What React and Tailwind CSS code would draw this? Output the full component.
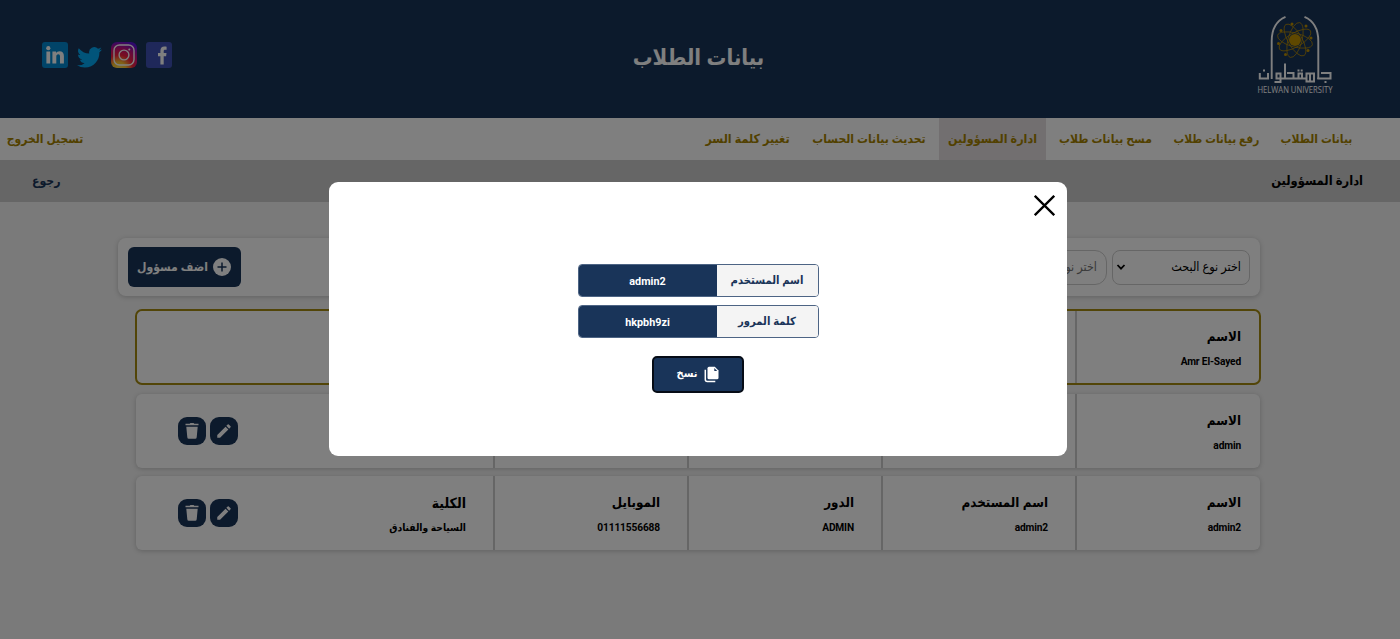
import React from "react";
import { MdEdit } from "react-icons/md";

const NAV = [
  { label: "بيانات الطلاب", cls: "w-[71px] text-[12px]" },
  { label: "رفع بيانات طلاب", cls: "w-[85px] text-[11.800px]" },
  { label: "مسح بيانات طلاب", cls: "w-[93px] text-[12.100px]" },
  { label: "ادارة المسؤولين", cls: "w-[89px] text-[12.400px]", active: true },
  { label: "تحديث بيانات الحساب", cls: "w-[114px] text-[12.100px]" },
  { label: "تغيير كلمة السر", cls: "w-[85px] text-[12.400px]" },
];

function LinkedIn() {
  return (
    <svg viewBox="0 0 26 26" className="size-[26px]">
      <rect width="26" height="26" rx="3" fill="#0288d1" />
      <circle cx="6.300" cy="6.200" r="2.100" fill="#fff" />
      <path d="M4.400 9.600h3.800V21.500H4.400zM10.400 9.600h3.600v1.500c.7-1.100 1.900-1.800 3.500-1.800 2.900 0 4.400 1.700 4.400 4.700v7.500h-3.900v-6.900c0-1.500-.6-2.300-1.700-2.300-1.300 0-2 .9-2 2.300v6.900h-3.900z" fill="#fff" />
    </svg>
  );
}

function Twitter() {
  return (
    <svg viewBox="0 0 24 20" className="mt-[5px] h-[21px] w-[25px]">
      <path fill="#03a9f4" d="M24 2.400a9.800 9.800 0 0 1-2.800.8A4.900 4.900 0 0 0 23.300.5a9.900 9.900 0 0 1-3.100 1.200 4.900 4.900 0 0 0-8.400 4.500A14 14 0 0 1 1.700 1a4.900 4.900 0 0 0 1.500 6.600 4.900 4.900 0 0 1-2.200-.6v.1a4.900 4.900 0 0 0 3.900 4.800 4.900 4.900 0 0 1-2.200.1 4.900 4.900 0 0 0 4.600 3.400A9.900 9.900 0 0 1 0 17.400a13.900 13.900 0 0 0 7.500 2.200c9.100 0 14-7.500 14-14v-.6A10 10 0 0 0 24 2.400z" />
    </svg>
  );
}

function Instagram() {
  return (
    <svg viewBox="0 0 26 26" className="size-[26px]">
      <defs>
        <radialGradient id="ig" cx="0.3" cy="1.05" r="1.1">
          <stop offset="0" stopColor="#ffdd55" />
          <stop offset="0.25" stopColor="#ffc52e" />
          <stop offset="0.5" stopColor="#f5203d" />
          <stop offset="0.74" stopColor="#c8107d" />
          <stop offset="1" stopColor="#5b10d8" />
        </radialGradient>
      </defs>
      <rect width="26" height="26" rx="6" fill="url(#ig)" />
      <rect x="3" y="3" width="20" height="20" rx="5.500" fill="none" stroke="#fff" strokeWidth="1.400" />
      <circle cx="13" cy="13" r="4.900" fill="none" stroke="#fff" strokeWidth="1.400" />
      <circle cx="18.300" cy="7.600" r="1" fill="#fff" />
    </svg>
  );
}

function Facebook() {
  return (
    <svg viewBox="0 0 26 26" className="size-[26px]">
      <rect width="26" height="26" rx="3" fill="#3f51b5" />
      <path fill="#fff" d="M14.400 22.500v-8.300h-2.400v-3.300h2.400V8.900c0-2.800 1.500-4.300 4-4.300.9 0 1.700.1 2.200.2v3h-1.400c-1.200 0-1.500.6-1.500 1.400v1.700h2.800l-.4 3.300h-2.400v8.300z" />
    </svg>
  );
}

function Logo() {
  return (
    <svg viewBox="0 0 80 84" className="h-[84px] w-[80px]" aria-label="Helwan University">
      <g fill="none" stroke="#fff" strokeWidth="1.900">
        <path d="M16.700 67V29C16.700 16 22 8.500 30.500 4.800" />
        <path d="M63.300 67V29C63.300 16 58 8.500 49.500 4.800" />
      </g>
      <g transform="translate(0 1)">
        <g fill="none" stroke="#bf9000" strokeWidth="0.700">
          <ellipse cx="40" cy="27" rx="18" ry="7" transform="rotate(15 40 27)" />
          <ellipse cx="40" cy="27" rx="18" ry="7" transform="rotate(60 40 27)" />
          <ellipse cx="40" cy="27" rx="18" ry="7" transform="rotate(105 40 27)" />
          <ellipse cx="40" cy="27" rx="18" ry="7" transform="rotate(150 40 27)" />
        </g>
        <g fill="#bf9000">
          <circle cx="40" cy="27" r="6" />
          <circle cx="37" cy="11" r="1.500" />
          <circle cx="51" cy="13" r="1.500" />
          <circle cx="26" cy="17.500" r="1.500" />
          <circle cx="56" cy="25" r="1.500" />
          <circle cx="23.500" cy="30.500" r="1.500" />
          <circle cx="53" cy="37.500" r="1.500" />
          <circle cx="30.500" cy="41.500" r="1.500" />
        </g>
      </g>
      <g fill="none" stroke="#fff" strokeWidth="2">
        <path d="M4.800 61V66.500H13V61M30 51.500V66.500H25.500M25.500 61.500H21.500V66.500H25.500V70H19.500M25.500 60.500V70M30 66.500H38.500V61H32M38 66.500H43.500V61.500H47V66.500H43M47 66.500H51.500V61.500H55V69.500H51.500V66.500M55 61.500H59V69.500H55M66 61H75.500V66.500H62.300" />
      </g>
      <path fill="#fff" d="M8 57.500h2v2H8zM42.500 57.500h2v2h-2zM45.700 57.500h2v2h-2zM69.500 69h2v2h-2z" />
      <text x="2.500" y="80.500" textLength="75" lengthAdjust="spacingAndGlyphs" direction="ltr" fill="#fff" fontWeight="400" fontFamily="Open Sans, sans-serif" fontSize="8.500">HELWAN UNIVERSITY</text>
    </svg>
  );
}

function Trash() {
  return (
    <svg viewBox="0 0 16 18" className="h-[18px] w-4" fill="#fff">
      <path d="M1.500 1.800h4.200l.7-.9h3.200l.7.900h4.200v1.500h-13zM2.300 4.800h11.400l-1 10.400q-.1 1.500-1.500 1.500H4.800q-1.400 0-1.500-1.500z" />
    </svg>
  );
}

function CopyIcon() {
  return (
    <svg viewBox="0 0 15 17" className="h-[17px] w-[15px]">
      <path fill="#fff" d="M5 .8h5.800L14.500 4.500v7.300q0 1.500-1.500 1.500H5q-1.500 0-1.500-1.500V2.300Q3.500.8 5 .8z" />
      <path fill="#193459" d="M10.300 2v2.900h2.900z" />
      <path fill="none" stroke="#fff" strokeWidth="1.500" d="M1.300 3.800v9.700q0 2 2 2h8" />
    </svg>
  );
}

function Cell({ title, value }) {
  return (
    <div className="flex w-[194px] shrink-0 flex-col border-r-2 border-[#cccccc] pt-[17px] pr-[27px] first:w-[183px] first:border-r-0 first:pr-[19px]">
      <div className="text-[13.300px] leading-5 whitespace-nowrap">{title}</div>
      <div className="mt-[6px] text-[10.200px] leading-[18px] tracking-[-0.15px] whitespace-nowrap">{value}</div>
    </div>
  );
}

function Row({ name, user, role, mobile, college, own }) {
  return (
    <div className={own ? "flex h-[74px] rounded-md bg-white outline-2 -outline-offset-1 outline-[#a58a10]" : "flex h-[74px] rounded-md bg-white shadow-[0_1px_5px_rgba(0,0,0,0.2)]"}>
      <Cell title="الاسم" value={name} />
      <Cell title="اسم المستخدم" value={user} />
      <Cell title="الدور" value={role} />
      <Cell title="الموبايل" value={mobile} />
      {!own && (
        <div className="flex grow items-center border-r-2 border-[#cccccc] pr-[27px]">
          <div className="w-[228px] self-start pt-[17px]">
            <div className="text-[14px] leading-5">الكلية</div>
            <div className="mt-[6px] text-[10.200px] leading-[18px]">{college}</div>
          </div>
          <div className="flex gap-[4px]">
            <div className="flex size-[28px] items-center justify-center rounded-[9px] bg-[#193459] text-white">
              <MdEdit size={18} />
            </div>
            <div className="flex size-[28px] items-center justify-center rounded-[9px] bg-[#193459]">
              <Trash />
            </div>
          </div>
        </div>
      )}
    </div>
  );
}

function Credential({ label, value }) {
  return (
    <div className="flex h-[33px] w-[241px] overflow-hidden rounded-[4px] border border-[#4d6484]">
      <div className="flex w-[101px] items-center justify-center bg-[#f4f4f4] pt-px text-[11.200px] whitespace-nowrap text-[#193459]">{label}</div>
      <div className="flex grow items-center justify-center bg-[#193459] pt-[3px] text-[10.800px] text-white">{value}</div>
    </div>
  );
}

export default function App() {
  return (
    <div dir="rtl" className="relative h-[639px] w-[1400px] overflow-hidden bg-[#f4f4f4] font-[Roboto,'DejaVu_Sans_Condensed','DejaVu_Sans',sans-serif] font-bold text-black">
      <header className="flex h-[118px] bg-[#193459]">
        <div className="w-[145px] pt-[12px] pr-[65px]">
          <Logo />
        </div>
        <h1 className="grow pt-[41px] pr-[47px] text-center text-[22px] leading-[34px] text-white">بيانات الطلاب</h1>
        <div dir="ltr" className="mr-auto ml-[42px] flex w-[147px] gap-[9px] pt-[42px]">
          <LinkedIn />
          <Twitter />
          <Instagram />
          <Facebook />
        </div>
      </header>

      <nav className="flex h-[42px] items-stretch bg-white pr-[39px] pl-[7px] text-[#a58200]">
        <div className="flex gap-1">
          {NAV.map((n) => (
            <div key={n.label} className={"flex items-center justify-center px-[9px] " + (n.active ? "bg-[#e4dfe0]" : "")}>
              <span className={"flex justify-center leading-[18px] whitespace-nowrap " + n.cls}>{n.label}</span>
            </div>
          ))}
        </div>
        <div className="mr-auto flex w-[76px] items-center justify-center text-[12px] whitespace-nowrap">تسجيل الخروج</div>
      </nav>

      <div className="flex h-[42px] items-center justify-between bg-[#cccccc] pr-[37px] pl-[32px] text-[12.800px]">
        <span>ادارة المسؤولين</span>
        <span className="text-[12.200px] text-[#193459]">رجوع</span>
      </div>

      <main className="mt-[36px] mr-[140px] w-[1142px]">
        <section className="flex h-[58px] items-center rounded-lg bg-white px-[10px] shadow-[0_1px_5px_rgba(0,0,0,0.2)]">
          <div className="flex h-[35px] w-[138px] items-center justify-between rounded-lg border border-[#cccccc] pr-[8px] pl-[3px] text-[12.500px] font-normal">
            <span>اختر نوع البحث</span>
            <svg viewBox="0 0 10 10" className="size-[10px]" fill="none" stroke="#000" strokeWidth="1.800"><path d="M1.500 3 5 6.700 8.500 3" /></svg>
          </div>
          <div className="mr-[5px] flex h-[35px] w-[200px] items-center rounded-xl border border-[#cccccc] pr-[9px] text-[12.500px] font-normal text-[#757575]">اختر نوع البحث</div>
          <button className="mr-auto flex h-[40px] w-[113px] items-center gap-[5px] rounded-md bg-[#193459] pr-[10px] text-[12.100px] whitespace-nowrap text-white">
            <svg viewBox="0 0 18 18" className="size-[18px] shrink-0"><circle cx="9" cy="9" r="9" fill="#fff" /><path d="M9 4.500v9M4.500 9h9" stroke="#193459" strokeWidth="1.500" /></svg>
            اضف مسؤول
          </button>
        </section>

        <div className="mt-[14px] flex w-[1124px] flex-col">
          <Row own name="Amr El-Sayed" user="amr" role="ADMIN" mobile="01111556688" />
          <div className="mt-[10px]"><Row name="admin" user="admin" role="ADMIN" mobile="01111556688" /></div>
          <div className="mt-[8px]"><Row name="admin2" user="admin2" role="ADMIN" mobile="01111556688" college="السياحة والفنادق" /></div>
        </div>
      </main>

      <div className="absolute inset-0 bg-black/50 pt-[182px] pl-[329px]" dir="ltr">
        <div dir="rtl" className="flex h-[274px] w-[738px] flex-col rounded-[9px] bg-white">
          <svg viewBox="0 0 21 21" className="mt-[13px] mr-[12px] size-[21px]" fill="none" stroke="#000" strokeWidth="2.300"><path d="M.8.8 20.200 20.200M20.200.8.8 20.200" /></svg>
          <div className="mt-[48px] flex flex-col items-center">
            <Credential label="اسم المستخدم" value="admin2" />
            <div className="mt-[8px]"><Credential label="كلمة المرور" value="hkpbh9zi" /></div>
            <button className="mt-[18px] flex h-[37px] w-[92px] items-center justify-center gap-[7px] rounded-[5px] border-2 border-[#060c16] bg-[#193459] text-[11px] text-white">
              <CopyIcon />
              نسخ
            </button>
          </div>
        </div>
      </div>
    </div>
  );
}
